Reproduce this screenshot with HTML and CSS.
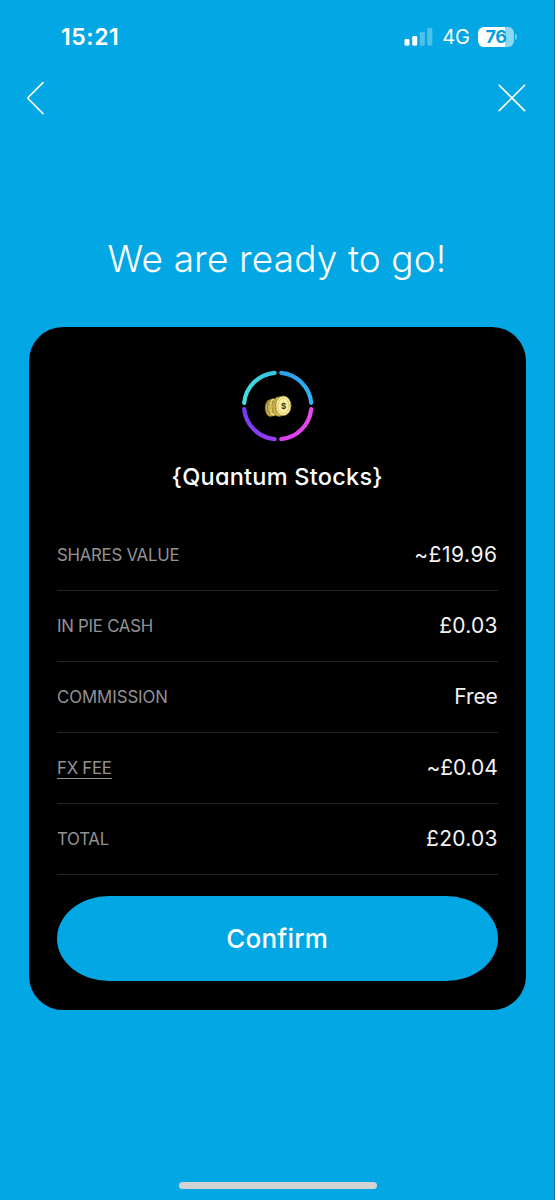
FILE: index.html
```html
<!DOCTYPE html>
<html lang="en">
<head>
<meta charset="utf-8">
<title>Confirm order</title>
<link rel="stylesheet" href="styles.css">
</head>
<body>
<main class="screen">
  <header class="status">
    <span class="time">15:21</span>
    <div class="indicators">
      <svg class="signal" width="29" height="18" viewBox="0 0 29 18" fill="#fff">
        <rect x="0.5" y="11" width="5" height="6.7" rx="1.4"/>
        <rect x="8.2" y="8" width="5" height="9.7" rx="1.4"/>
        <rect x="15.8" y="4" width="5" height="13.7" rx="1.4" opacity=".3"/>
        <rect x="23.3" y="0" width="5" height="17.7" rx="1.4" opacity=".3"/>
      </svg>
      <span class="network">4G</span>
      <div class="battery"><span class="level">76</span><i class="cap"></i></div>
    </div>
  </header>
  <nav class="nav">
    <svg width="20" height="34" viewBox="0 0 20 34" fill="none" stroke="#fff" stroke-width="1.6" stroke-linecap="round" stroke-linejoin="round"><path d="M17 1.6 2.3 16.2Q1.5 17 2.3 17.8L17 32.6"/></svg>
    <svg width="28" height="28" viewBox="0 0 28 28" fill="none" stroke="#fff" stroke-width="1.6" stroke-linecap="round"><path d="M1.2 1.2 26.6 26.6M26.6 1.2 1.2 26.6"/></svg>
  </nav>
  <h1 class="title">We are ready to go!</h1>
  <section class="card">
    <svg class="pie" width="74" height="74" viewBox="0 0 74 74" fill="none" stroke-width="4.2" stroke-linecap="round">
      <defs>
        <linearGradient id="teal" x1="0" y1="1" x2="1" y2="0"><stop stop-color="#45e2e2"/><stop offset="1" stop-color="#35c5df"/></linearGradient>
        <linearGradient id="blue" x1="0" y1="0" x2="1" y2="1"><stop stop-color="#2e9de8"/><stop offset="1" stop-color="#31b3f5"/></linearGradient>
        <linearGradient id="violet" x1="0" y1="0" x2="1" y2="1"><stop stop-color="#743cf8"/><stop offset="1" stop-color="#963cf3"/></linearGradient>
        <linearGradient id="pink" x1="1" y1="0" x2="0" y2="1"><stop stop-color="#e34bed"/><stop offset="1" stop-color="#d940e9"/></linearGradient>
      </defs>
      <path stroke="url(#teal)" d="M4.2 33.8A33.5 33.5 0 0 1 34.6 3.8"/>
      <path stroke="url(#blue)" d="M41.2 3.8A33.5 33.5 0 0 1 71.2 33.8"/>
      <path stroke="url(#pink)" d="M71.2 40.2A33.5 33.5 0 0 1 41.2 70.1"/>
      <path stroke="url(#violet)" d="M34.6 70.1A33.5 33.5 0 0 1 4.2 40.2"/>
      <g stroke-width=".6" stroke="#8a7428">
        <ellipse cx="30.4" cy="39" rx="5.2" ry="8.6" fill="#cdb54c"/>
        <ellipse cx="33.4" cy="38.3" rx="5.4" ry="8.8" fill="#efdf7c"/>
        <path d="M27.4 34v10M29.8 31.5v14M32.2 32v13" stroke-dasharray="2 1.4" stroke="#5e5115"/>
        <ellipse cx="39.2" cy="37.6" rx="7.3" ry="9.8" fill="#d6bd55"/>
        <ellipse cx="43.4" cy="36.8" rx="7.7" ry="9.9" fill="#fff4ab"/>
        <path d="M33.8 32.5v10.5M35.8 30.5v14" stroke-dasharray="1.4 1.4"/>
        <ellipse cx="43.5" cy="36.8" rx="5.7" ry="7.7" fill="#fbef9e" stroke="#c5aa49"/>
      </g>
      <text class="dollar" x="43.7" y="39.8" text-anchor="middle">$</text>
    </svg>
    <h2 class="name">{Quantum Stocks}</h2>
    <dl class="rows">
      <div class="row"><dt>SHARES VALUE</dt><dd class="approx-wide">~£19.96</dd></div>
      <div class="row"><dt>IN PIE CASH</dt><dd>£0.03</dd></div>
      <div class="row"><dt class="loose">COMMISSION</dt><dd class="free">Free</dd></div>
      <div class="row"><dt><span class="link">FX FEE</span></dt><dd class="approx">~£0.04</dd></div>
      <div class="row"><dt>TOTAL</dt><dd>£20.03</dd></div>
    </dl>
    <button class="confirm" type="button"><span>Confirm</span></button>
  </section>
  <div class="home"></div>
</main>
</body>
</html>
```
FILE: styles.css
```css
* { box-sizing: border-box; }
body { margin: 0; background: #02a7e3; }
.screen {
  width: 555px; height: 1200px; display: flex; flex-direction: column;
  background: #02a7e3; border-right: 1px solid #05719a; color: #fff;
  font-family: Inter, "Liberation Sans", sans-serif;
}
.status { height: 74px; padding: 0 40px 0 61px; display: flex; justify-content: space-between; align-items: center; }
.time { font-size: 23px; font-weight: 600; line-height: 26px; letter-spacing: .55px; }
.indicators { display: flex; align-items: center; }
.network { font-size: 20px; line-height: 24px; margin: 0 8px 0 9px; }
.battery {
  position: relative; width: 36px; height: 20px; border-radius: 6px;
  background: linear-gradient(90deg, #fff 75%, #8cd7f2 75%);
  color: #02a0d9; text-align: center;
}
.level { display: block; font-size: 18px; font-weight: 700; line-height: 20px; letter-spacing: -.4px; }
.cap { position: absolute; left: 37px; top: 7px; width: 2px; height: 6px; border-radius: 0 2px 2px 0; background: #72cdee; }
.nav { height: 48px; padding: 0 28px 0 26px; display: flex; align-items: center; justify-content: space-between; }
.title { margin: 112px 0 0; height: 50px; text-align: center; font-size: 37px; font-weight: 300; line-height: 50px; letter-spacing: .12px; white-space: nowrap; }
.card {
  margin: 43.4px 28px 0 28.5px; height: 682.6px; padding: 42px 28.5px 0;
  border-radius: 34px; background: #000;
  display: flex; flex-direction: column;
}
.pie { align-self: center; flex: none; }
.dollar { font: 700 8px Inter, sans-serif; fill: #41380f; stroke: none; }
.name { margin: 16.6px 0 0; height: 34px; text-align: center; font-size: 23.5px; font-weight: 500; line-height: 34px; letter-spacing: .25px; font-feature-settings: "cv11"; white-space: nowrap; }
.rows { margin: 26px 0 0; }
.row { height: 71px; display: flex; align-items: center; justify-content: space-between; border-bottom: 1px solid #252525; }
dt { margin-top: 1px; color: #929295; font-size: 16.8px; line-height: 22px; letter-spacing: -.25px; }
.loose { letter-spacing: -.05px; }
dd { margin: 1px -.2px 0 0; color: #f4f4f4; font-size: 21px; line-height: 28px; letter-spacing: .25px; }
.approx-wide { letter-spacing: .55px; }
.approx { letter-spacing: -.1px; }
.free { letter-spacing: -.1px; }
.link { border-bottom: 1px solid #929295; display: inline-block; line-height: 19px; }
.confirm {
  margin: 21px 0 0; height: 85px; flex: none; border: 0; padding: 2px 0 0;
  border-radius: 52px / 42.5px; background: #02a7e3; color: #fff;
  font: 500 26px/36px Inter, sans-serif; letter-spacing: .2px;
}
.home { width: 198px; height: 7px; border-radius: 4px; background: #d3d3d3; margin: auto auto 11.5px 178.5px; }
```
